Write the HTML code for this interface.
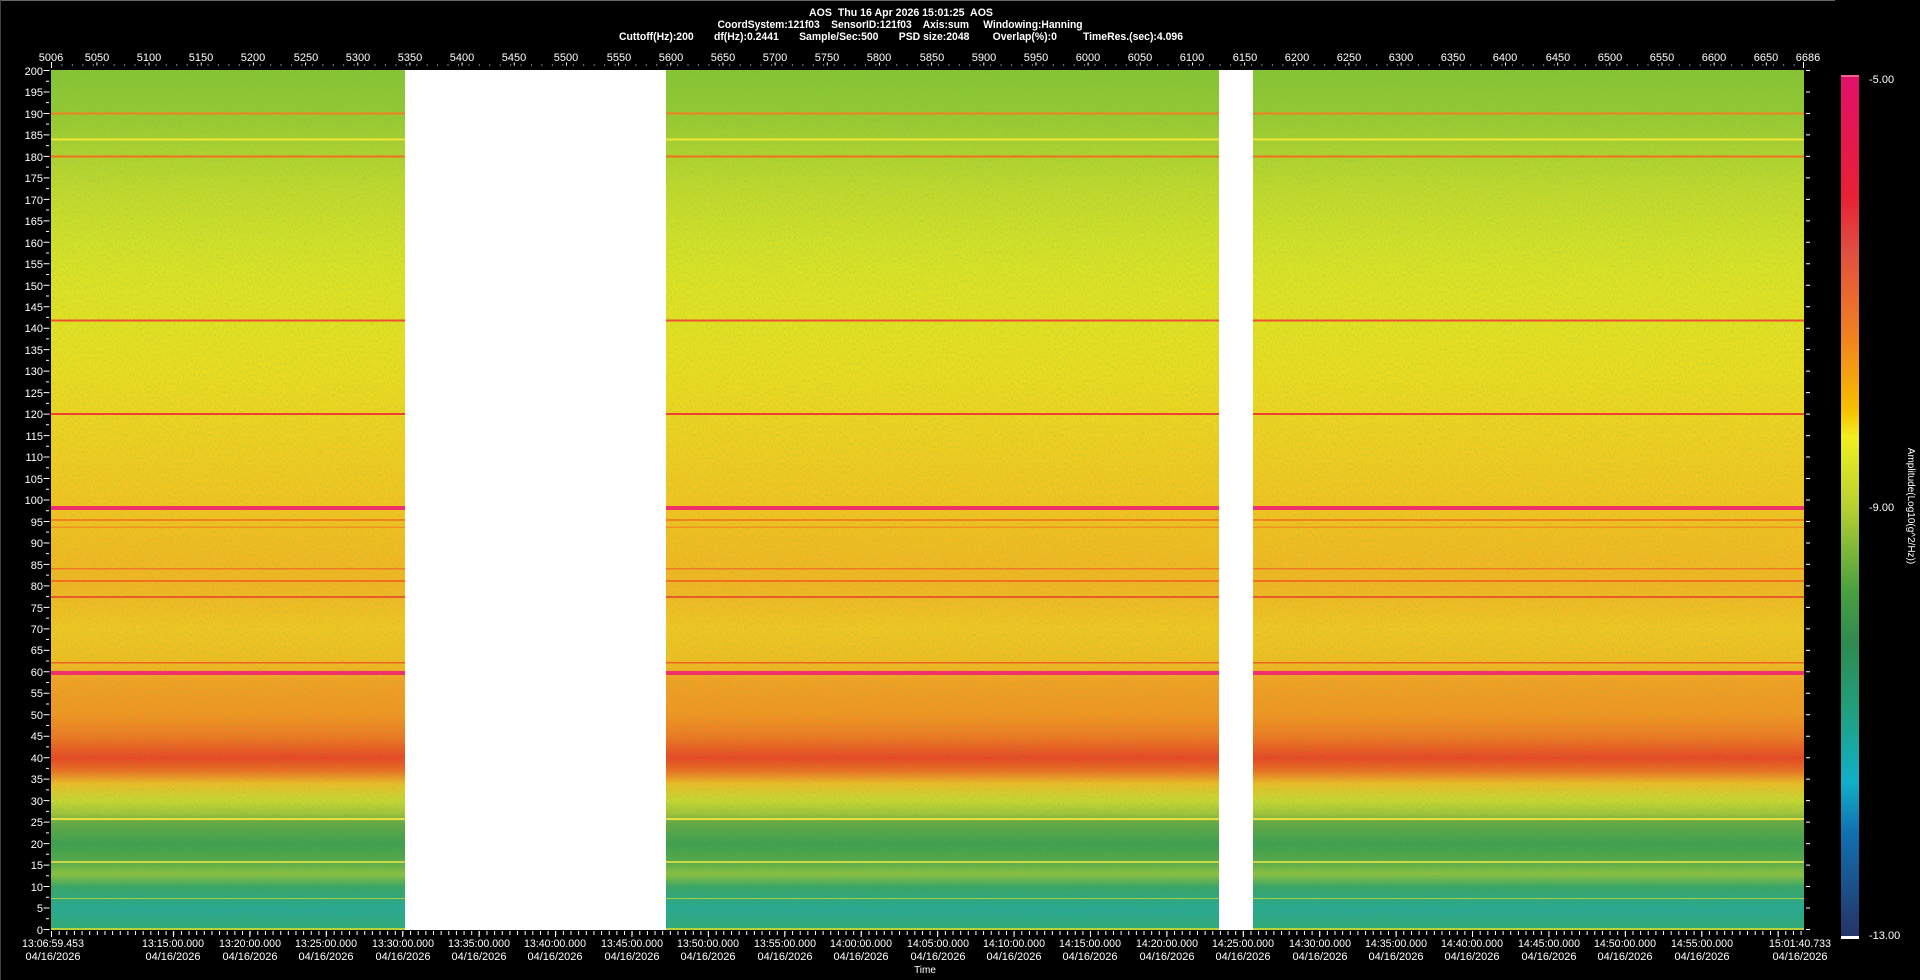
<!DOCTYPE html>
<html><head><meta charset="utf-8"><style>
html,body{margin:0;padding:0;background:#000;width:1920px;height:980px;overflow:hidden}
svg{display:block}
text{white-space:pre}
.t{font-family:"Liberation Sans Narrow","Liberation Sans",sans-serif;font-size:11px;fill:#fff}
.b{font-weight:bold;font-size:11px}
.c{font-family:"Liberation Sans",sans-serif;font-size:11px;fill:#fff}
</style></head><body>
<svg width="1920" height="980" viewBox="0 0 1920 980" xmlns="http://www.w3.org/2000/svg" xml:space="preserve">
<defs>
<linearGradient id="sp" gradientUnits="userSpaceOnUse" x1="0" y1="70" x2="0" y2="930">
<stop offset="0" stop-color="#88c434"/>
<stop offset="0.05" stop-color="#96c832"/>
<stop offset="0.1" stop-color="#b2d230"/>
<stop offset="0.15" stop-color="#c6da2c"/>
<stop offset="0.2" stop-color="#d4e028"/>
<stop offset="0.25" stop-color="#e0e224"/>
<stop offset="0.3" stop-color="#e6e022"/>
<stop offset="0.35" stop-color="#ecdc20"/>
<stop offset="0.4" stop-color="#f0d420"/>
<stop offset="0.45" stop-color="#f2cc20"/>
<stop offset="0.5" stop-color="#f4c420"/>
<stop offset="0.55" stop-color="#f4bc20"/>
<stop offset="0.6" stop-color="#f4b422"/>
<stop offset="0.65" stop-color="#f2c622"/>
<stop offset="0.69" stop-color="#f2bc22"/>
<stop offset="0.71" stop-color="#f4a022"/>
<stop offset="0.75" stop-color="#f49422"/>
<stop offset="0.775" stop-color="#f07822"/>
<stop offset="0.8" stop-color="#ea4424"/>
<stop offset="0.815" stop-color="#ee6e22"/>
<stop offset="0.83" stop-color="#eebc26"/>
<stop offset="0.85" stop-color="#c8d632"/>
<stop offset="0.865" stop-color="#a2c23a"/>
<stop offset="0.875" stop-color="#68a844"/>
<stop offset="0.9" stop-color="#3e9e50"/>
<stop offset="0.92" stop-color="#56a84a"/>
<stop offset="0.935" stop-color="#8cc040"/>
<stop offset="0.95" stop-color="#38a468"/>
<stop offset="0.975" stop-color="#28a894"/>
<stop offset="1" stop-color="#30a878"/>
</linearGradient>
<linearGradient id="cb" x1="0" y1="0" x2="0" y2="1">
<stop offset="0" stop-color="#e0106a"/>
<stop offset="0.14" stop-color="#e82034"/>
<stop offset="0.2" stop-color="#e04c40"/>
<stop offset="0.3" stop-color="#f08020"/>
<stop offset="0.39" stop-color="#f8c000"/>
<stop offset="0.42" stop-color="#f0f020"/>
<stop offset="0.5" stop-color="#b8d030"/>
<stop offset="0.6" stop-color="#48a040"/>
<stop offset="0.66" stop-color="#2e8a50"/>
<stop offset="0.74" stop-color="#20a080"/>
<stop offset="0.82" stop-color="#10b0c8"/>
<stop offset="0.88" stop-color="#1070b0"/>
<stop offset="1" stop-color="#243468"/>
</linearGradient>
<filter id="nz" x="0" y="0" width="100%" height="100%">
<feTurbulence type="fractalNoise" baseFrequency="0.9 0.35" numOctaves="1" seed="3"/>
<feColorMatrix type="matrix" values="0 0 0 0 0.1  0 0 0 0 0.5  0 0 0 0 0.1  0 0 0 -2.2 1.25"/>
</filter>
</defs>
<rect x="0" y="0" width="1835" height="1" fill="#666"/>
<rect x="0" y="0" width="1" height="980" fill="#444"/>
<text class="t b" x="901" y="16" text-anchor="middle" textLength="184" lengthAdjust="spacingAndGlyphs">AOS  Thu 16 Apr 2026 15:01:25  AOS</text>
<text class="t b" x="900" y="28" text-anchor="middle" textLength="365" lengthAdjust="spacingAndGlyphs">CoordSystem:121f03    SensorID:121f03    Axis:sum     Windowing:Hanning</text>
<text class="t b" x="901" y="40" text-anchor="middle" textLength="564" lengthAdjust="spacingAndGlyphs">Cuttoff(Hz):200       df(Hz):0.2441       Sample/Sec:500       PSD size:2048        Overlap(%):0         TimeRes.(sec):4.096</text>
<rect x="51" y="70" width="1753" height="860" fill="url(#sp)"/>
<rect x="51" y="70" width="1753" height="860" filter="url(#nz)" opacity="0.3"/>
<g>
<rect x="51" y="112.5" width="1753" height="2" fill="#f08020"/>
<rect x="51" y="138.5" width="1753" height="2" fill="#f0e838"/>
<rect x="51" y="155.5" width="1753" height="2" fill="#f07020"/>
<rect x="51" y="319.5" width="1753" height="2" fill="#f05030"/>
<rect x="51" y="413" width="1753" height="2" fill="#f04030"/>
<rect x="51" y="506" width="1753" height="4" fill="#f0306a"/>
<rect x="51" y="519" width="1753" height="2" fill="#f08020"/>
<rect x="51" y="526.5" width="1753" height="1.5" fill="#f09020"/>
<rect x="51" y="568" width="1753" height="1.5" fill="#f07828"/>
<rect x="51" y="580" width="1753" height="2" fill="#f07020"/>
<rect x="51" y="596" width="1753" height="2" fill="#e85a2a"/>
<rect x="51" y="662" width="1753" height="1.5" fill="#f06020"/>
<rect x="51" y="671" width="1753" height="4" fill="#f0306a"/>
<rect x="51" y="818" width="1753" height="2" fill="#e8e040"/>
<rect x="51" y="861" width="1753" height="2" fill="#c8d848"/>
<rect x="51" y="898" width="1753" height="1" fill="#a8d040"/>
<rect x="51" y="928" width="1753" height="2" fill="#b8d040"/>
</g>
<rect x="405" y="70" width="261" height="860" fill="#fff"/>
<rect x="1219" y="70" width="34" height="860" fill="#fff"/>
<line x1="51" y1="65" x2="1804" y2="65" stroke="#fff" stroke-width="1" stroke-dasharray="1 9.435"/>
<line x1="96.4" y1="64" x2="1804" y2="64" stroke="#fff" stroke-width="3" stroke-dasharray="1 51.17"/>
<rect x="51" y="62" width="1" height="6" fill="#fff"/><rect x="1803" y="62" width="1" height="6" fill="#fff"/>
<g class="t" text-anchor="middle">
<text x="51" y="61">5006</text><text x="97" y="61">5050</text><text x="149" y="61">5100</text><text x="201" y="61">5150</text><text x="253" y="61">5200</text><text x="306" y="61">5250</text><text x="358" y="61">5300</text><text x="410" y="61">5350</text><text x="462" y="61">5400</text><text x="514" y="61">5450</text><text x="566" y="61">5500</text><text x="619" y="61">5550</text><text x="671" y="61">5600</text><text x="723" y="61">5650</text><text x="775" y="61">5700</text><text x="827" y="61">5750</text><text x="879" y="61">5800</text><text x="932" y="61">5850</text><text x="984" y="61">5900</text><text x="1036" y="61">5950</text><text x="1088" y="61">6000</text><text x="1140" y="61">6050</text><text x="1192" y="61">6100</text><text x="1245" y="61">6150</text><text x="1297" y="61">6200</text><text x="1349" y="61">6250</text><text x="1401" y="61">6300</text><text x="1453" y="61">6350</text><text x="1505" y="61">6400</text><text x="1558" y="61">6450</text><text x="1610" y="61">6500</text><text x="1662" y="61">6550</text><text x="1714" y="61">6600</text><text x="1766" y="61">6650</text><text x="1808" y="61">6686</text>
</g>
<line x1="46.5" y1="70" x2="46.5" y2="931" stroke="#fff" stroke-width="6" stroke-dasharray="1 20.475"/>
<line x1="47.5" y1="80.7" x2="47.5" y2="931" stroke="#fff" stroke-width="3" stroke-dasharray="1 20.475"/>
<line x1="1808" y1="70" x2="1808" y2="931" stroke="#fff" stroke-width="4" stroke-dasharray="1 20.475"/>
<g class="t" text-anchor="end">
<text x="43" y="75">200</text><text x="43" y="96">195</text><text x="43" y="118">190</text><text x="43" y="139">185</text><text x="43" y="161">180</text><text x="43" y="182">175</text><text x="43" y="204">170</text><text x="43" y="225">165</text><text x="43" y="247">160</text><text x="43" y="268">155</text><text x="43" y="290">150</text><text x="43" y="311">145</text><text x="43" y="332">140</text><text x="43" y="354">135</text><text x="43" y="375">130</text><text x="43" y="397">125</text><text x="43" y="418">120</text><text x="43" y="440">115</text><text x="43" y="461">110</text><text x="43" y="483">105</text><text x="43" y="504">100</text><text x="43" y="526">95</text><text x="43" y="547">90</text><text x="43" y="569">85</text><text x="43" y="590">80</text><text x="43" y="612">75</text><text x="43" y="633">70</text><text x="43" y="654">65</text><text x="43" y="676">60</text><text x="43" y="697">55</text><text x="43" y="719">50</text><text x="43" y="740">45</text><text x="43" y="762">40</text><text x="43" y="783">35</text><text x="43" y="805">30</text><text x="43" y="826">25</text><text x="43" y="848">20</text><text x="43" y="869">15</text><text x="43" y="891">10</text><text x="43" y="912">5</text><text x="43" y="934">0</text>
</g>
<line x1="51" y1="933" x2="1804" y2="933" stroke="#fff" stroke-width="4" stroke-dasharray="1 6.64"/>
<line x1="172.9" y1="934" x2="1804" y2="934" stroke="#fff" stroke-width="6" stroke-dasharray="1 75.42"/>
<rect x="51" y="931" width="1" height="6" fill="#fff"/>
<g class="t" text-anchor="middle">
<text x="53" y="947" textLength="62" lengthAdjust="spacingAndGlyphs">13:06:59.453</text><text x="53" y="960">04/16/2026</text>
<text x="173" y="947" textLength="62" lengthAdjust="spacingAndGlyphs">13:15:00.000</text><text x="173" y="960">04/16/2026</text>
<text x="250" y="947" textLength="62" lengthAdjust="spacingAndGlyphs">13:20:00.000</text><text x="250" y="960">04/16/2026</text>
<text x="326" y="947" textLength="62" lengthAdjust="spacingAndGlyphs">13:25:00.000</text><text x="326" y="960">04/16/2026</text>
<text x="403" y="947" textLength="62" lengthAdjust="spacingAndGlyphs">13:30:00.000</text><text x="403" y="960">04/16/2026</text>
<text x="479" y="947" textLength="62" lengthAdjust="spacingAndGlyphs">13:35:00.000</text><text x="479" y="960">04/16/2026</text>
<text x="555" y="947" textLength="62" lengthAdjust="spacingAndGlyphs">13:40:00.000</text><text x="555" y="960">04/16/2026</text>
<text x="632" y="947" textLength="62" lengthAdjust="spacingAndGlyphs">13:45:00.000</text><text x="632" y="960">04/16/2026</text>
<text x="708" y="947" textLength="62" lengthAdjust="spacingAndGlyphs">13:50:00.000</text><text x="708" y="960">04/16/2026</text>
<text x="785" y="947" textLength="62" lengthAdjust="spacingAndGlyphs">13:55:00.000</text><text x="785" y="960">04/16/2026</text>
<text x="861" y="947" textLength="62" lengthAdjust="spacingAndGlyphs">14:00:00.000</text><text x="861" y="960">04/16/2026</text>
<text x="938" y="947" textLength="62" lengthAdjust="spacingAndGlyphs">14:05:00.000</text><text x="938" y="960">04/16/2026</text>
<text x="1014" y="947" textLength="62" lengthAdjust="spacingAndGlyphs">14:10:00.000</text><text x="1014" y="960">04/16/2026</text>
<text x="1090" y="947" textLength="62" lengthAdjust="spacingAndGlyphs">14:15:00.000</text><text x="1090" y="960">04/16/2026</text>
<text x="1167" y="947" textLength="62" lengthAdjust="spacingAndGlyphs">14:20:00.000</text><text x="1167" y="960">04/16/2026</text>
<text x="1243" y="947" textLength="62" lengthAdjust="spacingAndGlyphs">14:25:00.000</text><text x="1243" y="960">04/16/2026</text>
<text x="1320" y="947" textLength="62" lengthAdjust="spacingAndGlyphs">14:30:00.000</text><text x="1320" y="960">04/16/2026</text>
<text x="1396" y="947" textLength="62" lengthAdjust="spacingAndGlyphs">14:35:00.000</text><text x="1396" y="960">04/16/2026</text>
<text x="1472" y="947" textLength="62" lengthAdjust="spacingAndGlyphs">14:40:00.000</text><text x="1472" y="960">04/16/2026</text>
<text x="1549" y="947" textLength="62" lengthAdjust="spacingAndGlyphs">14:45:00.000</text><text x="1549" y="960">04/16/2026</text>
<text x="1625" y="947" textLength="62" lengthAdjust="spacingAndGlyphs">14:50:00.000</text><text x="1625" y="960">04/16/2026</text>
<text x="1702" y="947" textLength="62" lengthAdjust="spacingAndGlyphs">14:55:00.000</text><text x="1702" y="960">04/16/2026</text>
<text x="1800" y="947" textLength="62" lengthAdjust="spacingAndGlyphs">15:01:40.733</text><text x="1800" y="960">04/16/2026</text>
</g>
<text class="t" x="925" y="973" text-anchor="middle" style="font-size:10px">Time</text>
<rect x="1841" y="76" width="18" height="860" fill="url(#cb)"/>
<rect x="1841" y="75" width="18" height="2" fill="#f06090"/>
<rect x="1841" y="936" width="18" height="3" fill="#fff"/>
<g class="c">
<text x="1869" y="83">-5.00</text>
<text x="1869" y="511">-9.00</text>
<text x="1869" y="939">-13.00</text>
</g>
<text class="t" transform="translate(1908,506) rotate(90)" text-anchor="middle" style="font-size:10px">Amplitude(Log10(g^2/Hz))</text>
</svg>
</body></html>
